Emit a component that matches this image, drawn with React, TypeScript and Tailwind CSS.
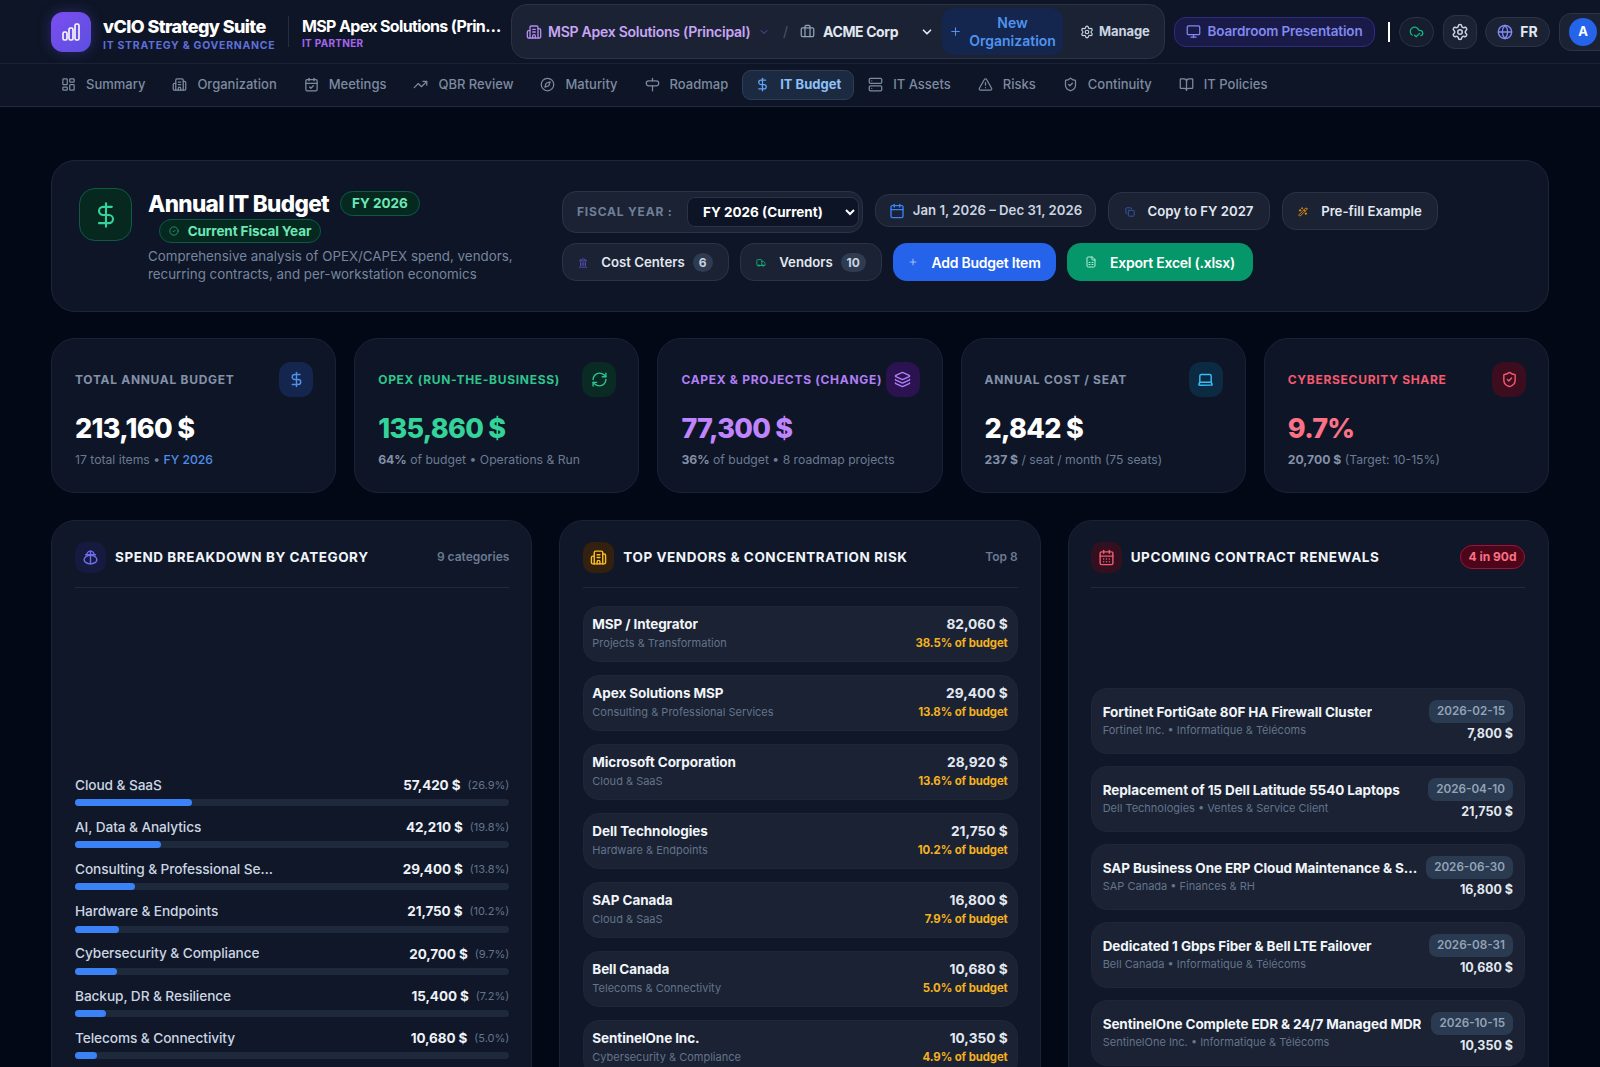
import {
  BookOpen,
  Briefcase,
  Building2,
  Calendar,
  CalendarCheck,
  CalendarDays,
  ChevronDown,
  CircleCheck,
  CloudCheck,
  Compass,
  Copy,
  DollarSign,
  FileSpreadsheet,
  Globe,
  Laptop,
  Layers,
  LayoutDashboard,
  Monitor,
  Plus,
  RefreshCw,
  Server,
  Settings,
  ShieldCheck,
  TrendingUp,
  TriangleAlert,
  Truck,
  Wand2,
  Landmark,
} from 'lucide-react';

function RoadmapIcon({ size = 15, className }: { size?: number; className?: string }) {
  return (
    <svg width={size} height={size} viewBox="0 0 24 24" fill="none" stroke="currentColor" strokeWidth="2" strokeLinecap="round" className={className}>
      <rect x="2" y="6" width="20" height="8" rx="4" />
      <path d="M12 2v4M12 14v8" />
    </svg>
  );
}

function SpendIcon({ size = 16, className }: { size?: number; className?: string }) {
  return (
    <svg width={size} height={size} viewBox="0 0 24 24" fill="none" stroke="currentColor" strokeWidth="2" strokeLinecap="round" className={className}>
      <path d="M7 8a5 5 0 0 1 10 0" />
      <path d="M5 8h14" />
      <ellipse cx="12" cy="15" rx="9" ry="6" />
      <path d="M12 3v18" />
    </svg>
  );
}

const navItems = [
  { label: 'Summary', icon: LayoutDashboard },
  { label: 'Organization', icon: Building2 },
  { label: 'Meetings', icon: CalendarCheck },
  { label: 'QBR Review', icon: TrendingUp },
  { label: 'Maturity', icon: Compass },
  { label: 'Roadmap', icon: RoadmapIcon },
  { label: 'IT Budget', icon: DollarSign, active: true },
  { label: 'IT Assets', icon: Server },
  { label: 'Risks', icon: TriangleAlert },
  { label: 'Continuity', icon: ShieldCheck },
  { label: 'IT Policies', icon: BookOpen },
];

const categories = [
  { name: 'Cloud & SaaS', amount: '57,420 $', pct: 26.9 },
  { name: 'AI, Data & Analytics', amount: '42,210 $', pct: 19.8 },
  { name: 'Consulting & Professional Services', amount: '29,400 $', pct: 13.8 },
  { name: 'Hardware & Endpoints', amount: '21,750 $', pct: 10.2 },
  { name: 'Cybersecurity & Compliance', amount: '20,700 $', pct: 9.7 },
  { name: 'Backup, DR & Resilience', amount: '15,400 $', pct: 7.2 },
  { name: 'Telecoms & Connectivity', amount: '10,680 $', pct: 5.0 },
];

const vendors = [
  { name: 'MSP / Integrator', sub: 'Projects & Transformation', amount: '82,060 $', share: '38.5%' },
  { name: 'Apex Solutions MSP', sub: 'Consulting & Professional Services', amount: '29,400 $', share: '13.8%' },
  { name: 'Microsoft Corporation', sub: 'Cloud & SaaS', amount: '28,920 $', share: '13.6%' },
  { name: 'Dell Technologies', sub: 'Hardware & Endpoints', amount: '21,750 $', share: '10.2%' },
  { name: 'SAP Canada', sub: 'Cloud & SaaS', amount: '16,800 $', share: '7.9%' },
  { name: 'Bell Canada', sub: 'Telecoms & Connectivity', amount: '10,680 $', share: '5.0%' },
  { name: 'SentinelOne Inc.', sub: 'Cybersecurity & Compliance', amount: '10,350 $', share: '4.9%' },
];

const renewals = [
  { name: 'Fortinet FortiGate 80F HA Firewall Cluster', sub: 'Fortinet Inc. • Informatique & Télécoms', date: '2026-02-15', amount: '7,800 $' },
  { name: 'Replacement of 15 Dell Latitude 5540 Laptops', sub: 'Dell Technologies • Ventes & Service Client', date: '2026-04-10', amount: '21,750 $' },
  { name: 'SAP Business One ERP Cloud Maintenance & Support', sub: 'SAP Canada • Finances & RH', date: '2026-06-30', amount: '16,800 $' },
  { name: 'Dedicated 1 Gbps Fiber & Bell LTE Failover', sub: 'Bell Canada • Informatique & Télécoms', date: '2026-08-31', amount: '10,680 $' },
  { name: 'SentinelOne Complete EDR & 24/7 Managed MDR', sub: 'SentinelOne Inc. • Informatique & Télécoms', date: '2026-10-15', amount: '10,350 $' },
];

function TopBar() {
  return (
    <header className="flex h-16 items-center overflow-hidden border-b border-[#1a2335] bg-[#0e1526] pl-[51px]">
      {/* Marque */}
      <div className="flex h-10 w-10 shrink-0 items-center justify-center rounded-xl bg-gradient-to-br from-[#7c4df0] to-[#5b4fe0] shadow-[0_0_14px_rgba(99,80,230,0.35)]">
        <svg width="20" height="20" viewBox="0 0 20 20" fill="none" stroke="white" strokeWidth="1.6">
          <rect x="2" y="10" width="4" height="8" rx="1.5" />
          <rect x="8" y="6" width="4" height="12" rx="1.5" />
          <rect x="14" y="2" width="4" height="16" rx="1.5" />
        </svg>
      </div>
      <div className="mt-[6px] ml-3 w-[172px] shrink-0">
        <div className="text-[18px] leading-[22px] font-extrabold tracking-[-0.6px] text-white">vCIO Strategy Suite</div>
        <div className="text-[10.5px] leading-[15px] font-bold tracking-[0.7px] whitespace-nowrap text-[#5f6fdc]">IT STRATEGY &amp; GOVERNANCE</div>
      </div>
      <div className="ml-[13px] h-[31px] w-px shrink-0 bg-[#252e40]" />
      <div className="mt-[2px] ml-[13px] w-[200px] shrink-0">
        <div className="truncate text-[16px] leading-[22px] font-bold tracking-[-0.65px] text-white">MSP Apex Solutions (Principal)</div>
        <div className="text-[10px] leading-[13px] font-bold tracking-[0.3px] text-[#a565ee]">IT PARTNER</div>
      </div>

      {/* Sélecteur de contexte */}
      <div className="ml-[9px] flex h-[55px] w-[654px] shrink-0 items-center rounded-2xl border border-[#2a3446] bg-[#1a2234] pl-[14px]">
        <Building2 size={16} className="shrink-0 text-[#b58af0]" />
        <span className="ml-[6px] w-[201px] text-[14px] font-semibold tracking-[-0.25px] whitespace-nowrap text-[#c9a6f5]">MSP Apex Solutions (Principal)</span>
        <ChevronDown size={12} className="ml-[9px] shrink-0 text-[#6b46a8]" />
        <span className="ml-[13px] text-[14px] text-[#475569]">/</span>
        <Briefcase size={15} className="ml-[12px] shrink-0 text-[#94a3b8]" />
        <span className="ml-[8px] w-[74px] text-[14px] font-bold tracking-[-0.4px] whitespace-nowrap text-[#e2e8f0]">ACME Corp</span>
        <ChevronDown size={14} strokeWidth={3} className="ml-[23px] shrink-0 text-[#e2e8f0]" />
        <div className="ml-[8px] flex h-[47px] w-[121px] items-center justify-center gap-[7px] rounded-xl bg-[#14264d] text-[#4f93ef]">
          <Plus size={13} />
          <span className="text-center text-[14px] leading-[18px] font-semibold">New<br />Organization</span>
        </div>
        <div className="ml-[17px] flex items-center gap-[5px] text-[#cbd5e1]">
          <Settings size={14} />
          <span className="text-[13px] font-bold tracking-[-0.1px]">Manage</span>
        </div>
      </div>

      {/* Actions */}
      <div className="ml-[9px] flex h-[30px] w-[201px] shrink-0 items-center justify-center gap-[6px] rounded-xl border border-[#2f2c80] bg-[#191a47] text-[#8189f0]">
        <Monitor size={15} />
        <span className="text-[13.5px] font-semibold tracking-[-0.15px] whitespace-nowrap">Boardroom Presentation</span>
      </div>
      <div className="ml-[13px] h-[20px] w-[2px] shrink-0 bg-white" />
      <div className="ml-[9px] flex h-[30px] w-[35px] shrink-0 items-center justify-center rounded-full border border-[#2a3446] bg-[#151d2e] text-[#10b981]">
        <CloudCheck size={15} />
      </div>
      <div className="ml-[9px] flex h-[34px] w-[34px] shrink-0 items-center justify-center rounded-xl border border-[#2a3446] bg-[#1a2234] text-[#cbd5e1]">
        <Settings size={18} />
      </div>
      <div className="ml-[8px] flex h-[30px] w-[65px] shrink-0 items-center justify-center gap-[7px] rounded-full border border-[#2a3446] bg-[#1a2234]">
        <Globe size={16} className="text-[#818cf8]" />
        <span className="text-[14px] font-bold text-[#e2e8f0]">FR</span>
      </div>
      <div className="ml-[9px] flex h-[38px] w-[60px] shrink-0 items-center rounded-xl border border-[#2a3446] bg-[#1a2234] pl-[9px]">
        <div className="flex h-7 w-7 items-center justify-center rounded-full bg-[#2563eb] text-[13px] font-bold text-white">A</div>
      </div>
    </header>
  );
}

function NavBar() {
  return (
    <nav className="flex h-[43px] items-center gap-[1px] border-b border-[#1e293b] bg-[#0e1526] pb-[1px] pl-[48px]">
      {navItems.map((item) => {
        const Icon = item.icon;
        return (
          <div
            key={item.label}
            className={`flex h-[30px] items-center gap-[10px] rounded-[9px] border px-3 text-[13px] whitespace-nowrap ${
              item.active
                ? 'border-[#2f3e55] bg-[#1b2a40] font-bold text-[#8ec1fa]'
                : 'border-transparent font-medium text-[#7d8aa0]'
            }`}
          >
            <Icon size={15} className={item.active ? 'text-[#60a5fa]' : 'text-[#7d8aa0]'} />
            {item.label}
          </div>
        );
      })}
    </nav>
  );
}

function PillButton({ className, children }: { className?: string; children: React.ReactNode }) {
  return (
    <div className={`flex items-center rounded-[14px] text-[13.2px] font-semibold whitespace-nowrap ${className ?? ''}`}>
      {children}
    </div>
  );
}

function Hero() {
  return (
    <section className="flex h-[152px] rounded-3xl border border-[#1d2637] bg-[#0e1526] pt-[27px] pl-[27px]">
      <div className="flex h-[53px] w-[53px] shrink-0 items-center justify-center rounded-2xl border border-[#0f5a45] bg-[#06281f] text-[#34d399]">
        <DollarSign size={28} strokeWidth={1.8} />
      </div>
      <div className="ml-4 w-[414px] shrink-0">
        <div className="mt-[1px] flex h-[29px] items-center gap-[11px]">
          <h1 className="text-[22.5px] leading-[30px] font-extrabold tracking-[-0.65px] text-white">Annual IT Budget</h1>
          <span className="flex h-[25px] items-center rounded-full border border-[#0c5a45] bg-[#05291f] px-[11px] text-[13.5px] font-bold text-[#6ee7b7]">FY 2026</span>
        </div>
        <div className="mt-[1px] ml-[11px] flex h-[24px] w-[162px] items-center justify-center gap-[9px] rounded-full border border-[#0c5a45] bg-[#05291f]">
          <CircleCheck size={10} className="text-[#2f9c78]" />
          <span className="text-[13.5px] font-bold tracking-[-0.1px] whitespace-nowrap text-[#6ee7b7]">Current Fiscal Year</span>
        </div>
        <p className="mt-[5px] w-[375px] text-[13.35px] leading-[17.5px] text-[#76859e]">
          Comprehensive analysis of OPEX/CAPEX spend, vendors, recurring contracts, and per-workstation economics
        </p>
      </div>
      <div className="mt-[2px] flex flex-col gap-[14px]">
        <div className="flex h-[42px] items-start gap-3 pt-[4px]">
          <div className="-mt-[3px] flex h-[42px] w-[301px] items-center rounded-[14px] border border-[#2a3446] bg-[#1a2234] pl-[14px]">
            <span className="w-[110px] text-[12px] font-bold tracking-[0.8px] whitespace-nowrap text-[#6e7e96]">FISCAL YEAR :</span>
            <select
              defaultValue="FY 2026 (Current)"
              className="h-[30px] w-[172px] rounded-lg border border-[#2a3446] bg-[#0d1425] pl-[11px] text-[13.5px] font-bold text-white"
            >
              <option>FY 2026 (Current)</option>
              <option>FY 2027</option>
            </select>
          </div>
          <PillButton className="h-[33px] w-[221px] justify-center gap-[8px] border border-[#2a3446] bg-[#1a2234] pt-px font-medium text-[#cbd5e1]">
            <Calendar size={16} className="text-[#3b82f6]" />
            Jan 1, 2026 – Dec 31, 2026
          </PillButton>
          <PillButton className="-mt-[2px] h-[38px] w-[162px] justify-center gap-[13px] border border-[#2a3446] bg-[#1a2234] pt-px text-[#e2e8f0]">
            <Copy size={10} className="text-[#3b5fb5]" />
            Copy to FY 2027
          </PillButton>
          <PillButton className="-mt-[2px] h-[38px] w-[156px] justify-center gap-[13px] border border-[#2a3446] bg-[#1a2234] pt-px text-[#e2e8f0]">
            <Wand2 size={10} className="text-[#f59e0b]" />
            Pre-fill Example
          </PillButton>
        </div>
        <div className="-mt-[3px] flex gap-[11px]">
          <PillButton className="h-[38px] w-[167px] justify-center gap-[13px] border border-[#2a3446] bg-[#1a2234] pt-px text-[#e2e8f0]">
            <Landmark size={10} className="text-[#5b56c8]" />
            Cost Centers
            <span className="-ml-[5px] flex h-[19px] w-[20px] items-center justify-center rounded-full bg-[#2f3b50] text-[12px] font-bold text-[#cbd5e1]">6</span>
          </PillButton>
          <PillButton className="h-[38px] w-[142px] justify-center gap-[13px] border border-[#2a3446] bg-[#1a2234] pt-px text-[#e2e8f0]">
            <Truck size={10} className="text-[#10b981]" />
            Vendors
            <span className="-ml-[5px] flex h-[19px] w-[25px] items-center justify-center rounded-full bg-[#2f3b50] text-[12px] font-bold text-[#cbd5e1]">10</span>
          </PillButton>
          <PillButton className="h-[38px] w-[163px] justify-center gap-[13px] bg-[#2563eb] text-[14px] font-bold tracking-[-0.25px] text-white">
            <Plus size={10} className="text-[#bfd3fb]" />
            Add Budget Item
          </PillButton>
          <PillButton className="h-[38px] w-[186px] justify-center gap-[13px] bg-[#059669] text-[14px] font-bold tracking-[-0.25px] text-white">
            <FileSpreadsheet size={12} className="text-[#b7ecd6]" />
            Export Excel (.xlsx)
          </PillButton>
        </div>
      </div>
    </section>
  );
}

function KpiCard({
  label,
  labelClass,
  icon: Icon,
  iconClass,
  boxClass,
  value,
  valueClass,
  children,
}: {
  label: string;
  labelClass: string;
  icon: typeof DollarSign;
  iconClass: string;
  boxClass: string;
  value: string;
  valueClass: string;
  children: React.ReactNode;
}) {
  return (
    <div className="h-[155px] rounded-3xl border border-[#1a2334] bg-[#0e1526] pt-[23px] pr-[22px] pl-[23px]">
      <div className="flex h-[35px] items-center justify-between">
        <span className={`text-[12px] font-bold tracking-[0.7px] whitespace-nowrap ${labelClass}`}>{label}</span>
        <span className={`flex h-[35px] w-[34px] shrink-0 items-center justify-center rounded-xl ${boxClass}`}>
          <Icon size={17} className={iconClass} />
        </span>
      </div>
      <div className={`mt-[15px] text-[27px] leading-[34px] font-extrabold tracking-[-0.7px] ${valueClass}`}>{value}</div>
      <div className="mt-[5px] text-[12.2px] leading-[18px] whitespace-nowrap text-[#6b7a92]">{children}</div>
    </div>
  );
}

function KpiRow() {
  const strong = 'font-bold text-[#8391a8]';
  return (
    <section className="mt-[26px] grid grid-cols-5 gap-[18px]">
      <KpiCard label="TOTAL ANNUAL BUDGET" labelClass="text-[#8391a8]" icon={DollarSign} iconClass="text-[#4f8fe8]" boxClass="bg-[#14264d]" value="213,160 $" valueClass="text-white">
        17 total items • <span className="font-medium text-[#4f8fe8]">FY 2026</span>
      </KpiCard>
      <KpiCard label="OPEX (RUN-THE-BUSINESS)" labelClass="text-[#2fc48d]" icon={RefreshCw} iconClass="text-[#2fc48d]" boxClass="bg-[#0a2a24]" value="135,860 $" valueClass="text-[#34d399]">
        <span className={strong}>64%</span> of budget • Operations &amp; Run
      </KpiCard>
      <KpiCard label="CAPEX & PROJECTS (CHANGE)" labelClass="text-[#b07ef5]" icon={Layers} iconClass="text-[#b07ef5]" boxClass="bg-[#2a1350]" value="77,300 $" valueClass="text-[#c084fc]">
        <span className={strong}>36%</span> of budget • 8 roadmap projects
      </KpiCard>
      <KpiCard label="ANNUAL COST / SEAT" labelClass="text-[#8391a8]" icon={Laptop} iconClass="text-[#38bdf8]" boxClass="bg-[#0c2b42]" value="2,842 $" valueClass="text-white">
        <span className={strong}>237 $</span> / seat / month (75 seats)
      </KpiCard>
      <KpiCard label="CYBERSECURITY SHARE" labelClass="text-[#f4596e]" icon={ShieldCheck} iconClass="text-[#f4596e]" boxClass="bg-[#3b0d1f]" value="9.7%" valueClass="text-[#fb7185]">
        <span className={strong}>20,700 $</span> (Target: 10-15%)
      </KpiCard>
    </section>
  );
}

function PanelHeader({
  icon: Icon,
  iconClass,
  boxClass,
  title,
  children,
}: {
  icon: typeof DollarSign | typeof SpendIcon;
  iconClass: string;
  boxClass: string;
  title: string;
  children: React.ReactNode;
}) {
  return (
    <div className="flex h-[46px] items-start justify-between border-b border-[#1e293b]">
      <div className="flex items-center gap-[9px]">
        <span className={`flex h-[31px] w-[31px] items-center justify-center rounded-[10px] ${boxClass}`}>
          <Icon size={17} className={iconClass} />
        </span>
        <h2 className="text-[13.5px] font-bold tracking-[0.55px] whitespace-nowrap text-[#f1f5f9]">{title}</h2>
      </div>
      {children}
    </div>
  );
}

function Panels() {
  return (
    <section className="mt-[27px] grid grid-cols-3 gap-[27px]">
      {/* Répartition */}
      <div className="rounded-3xl border border-[#1a2334] bg-[#0f1729] pt-[21px] pr-[22px] pl-[23px]">
        <PanelHeader icon={SpendIcon} iconClass="text-[#6d6ff0]" boxClass="bg-[#161a3e]" title="SPEND BREAKDOWN BY CATEGORY">
          <span className="mt-[6px] text-[12px] font-semibold text-[#6b7a92]">9 categories</span>
        </PanelHeader>
        <div className="mt-[187px] flex flex-col gap-[11.2px]">
          {categories.map((c) => (
            <div key={c.name}>
              <div className="flex h-[20px] items-center justify-between">
                <span className="max-w-[199px] truncate text-[13.7px] font-medium tracking-[-0.1px] text-[#cbd5e1]">{c.name}</span>
                <span className="flex items-center gap-[7px]">
                  <span className="text-[13.5px] font-bold tracking-[-0.1px] text-[#eef2f7]">{c.amount}</span>
                  <span className="text-[11px] text-[#64748b]">({c.pct.toFixed(1)}%)</span>
                </span>
              </div>
              <div className="mt-[4px] h-[7px] rounded-full bg-[#1e293b]">
                <div className="h-full rounded-full bg-[#3b82f6]" style={{ width: `${c.pct}%` }} />
              </div>
            </div>
          ))}
        </div>
        <div className="h-[40px]" />
      </div>

      {/* Fournisseurs */}
      <div className="rounded-3xl border border-[#1a2334] bg-[#0f1729] pt-[21px] pr-[22px] pl-[23px]">
        <PanelHeader icon={Building2} iconClass="text-[#fbbf24]" boxClass="bg-[#33200f]" title="TOP VENDORS & CONCENTRATION RISK">
          <span className="mt-[6px] text-[12px] font-semibold text-[#6b7a92]">Top 8</span>
        </PanelHeader>
        <div className="mt-[18px] flex flex-col gap-[13px]">
          {vendors.map((v) => (
            <div key={v.name} className="flex h-[56px] items-start justify-between rounded-2xl border border-[#1e2739] bg-[#1a2233] pt-[8px] pr-[9px] pl-[8px]">
              <div>
                <div className="text-[13.5px] leading-[19px] font-bold tracking-[-0.1px] text-[#f1f5f9]">{v.name}</div>
                <div className="text-[11px] leading-[18px] text-[#64748b]">{v.sub}</div>
              </div>
              <div className="text-right">
                <div className="text-[13.7px] leading-[19px] font-bold text-[#e2e8f0]">{v.amount}</div>
                <div className="text-[11.4px] leading-[18px] font-bold tracking-[-0.1px] text-[#f5b21f]">{v.share} of budget</div>
              </div>
            </div>
          ))}
        </div>
      </div>

      {/* Renouvellements */}
      <div className="rounded-3xl border border-[#1a2334] bg-[#0f1729] pt-[21px] pr-[23px] pl-[22px]">
        <PanelHeader icon={CalendarDays} iconClass="text-[#f4596e]" boxClass="bg-[#33101f]" title="UPCOMING CONTRACT RENEWALS">
          <span className="mt-[3px] flex h-[24px] w-[65px] items-center justify-center rounded-full border border-[#9f1239] bg-[#4c0519] text-[12px] font-bold text-[#fb7185]">4 in 90d</span>
        </PanelHeader>
        <div className="mt-[100px] flex flex-col gap-[12px]">
          {renewals.map((r) => (
            <div key={r.date} className="flex h-[66px] justify-between gap-[5px] rounded-2xl border border-[#1e2739] bg-[#1a2233] px-[11px] pt-[11px]">
              <div className="min-w-0 pt-[2px]">
                <div className="truncate text-[13.5px] leading-[20px] font-bold tracking-[-0.1px] text-[#f1f5f9]">{r.name}</div>
                <div className="truncate text-[11px] leading-[17px] text-[#64748b]">{r.sub}</div>
              </div>
              <div className="flex shrink-0 flex-col items-end">
                <span className="flex h-[23px] items-center rounded-lg bg-[#2a3a50] px-[8px] text-[11.7px] font-semibold text-[#94a3b8]">{r.date}</span>
                <span className="mt-[1px] text-[12.5px] leading-[20px] font-bold text-[#e2e8f0]">{r.amount}</span>
              </div>
            </div>
          ))}
        </div>
      </div>
    </section>
  );
}

export default function App() {
  return (
    <div className="h-[1067px] overflow-hidden bg-[#030817] font-[Inter,sans-serif]">
      <TopBar />
      <NavBar />
      <main className="px-[51px] pt-[53px]">
        <Hero />
        <KpiRow />
        <Panels />
      </main>
    </div>
  );
}
